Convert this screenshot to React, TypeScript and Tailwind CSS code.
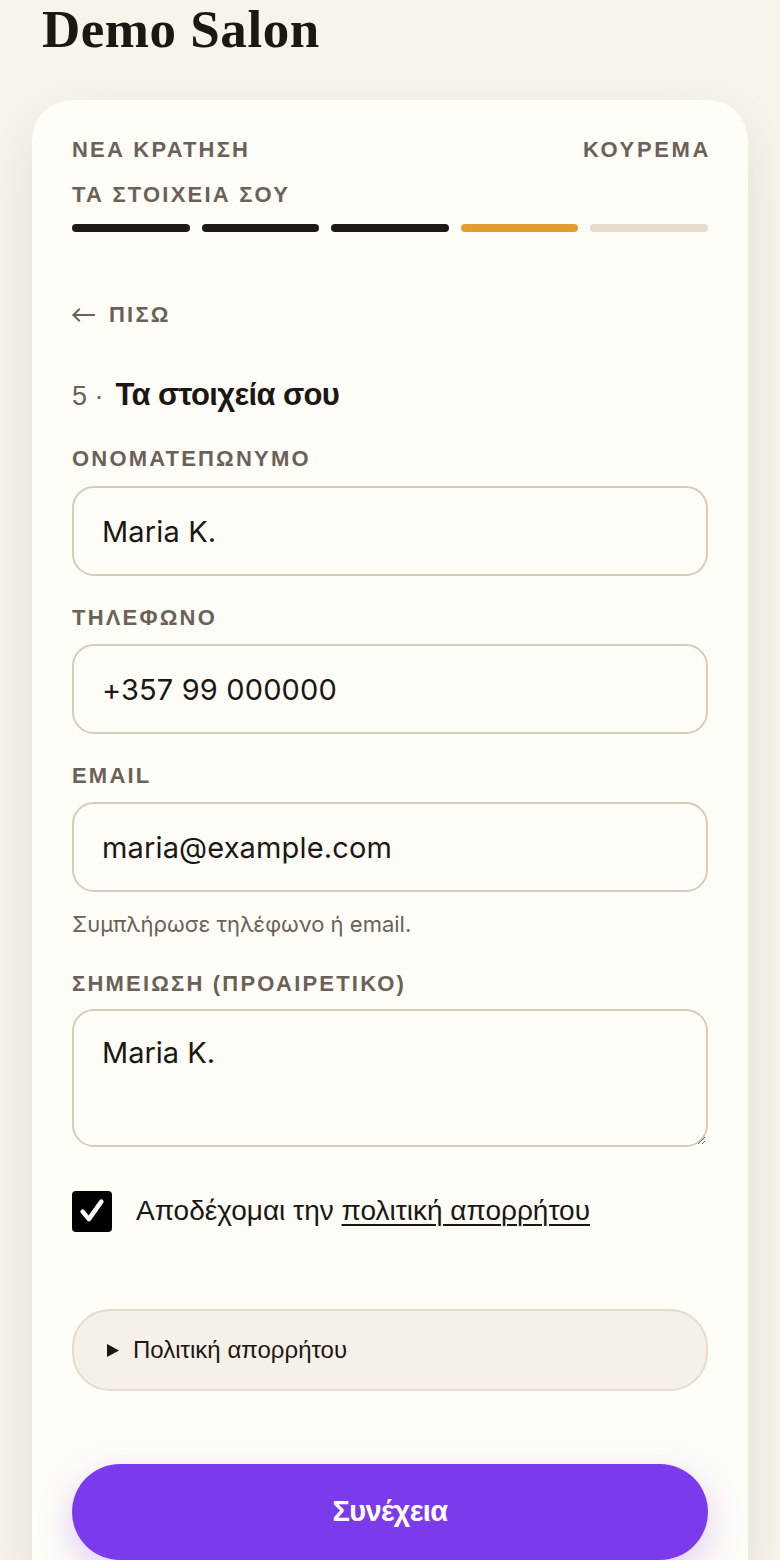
import React from "react";

const label =
  "block font-['Liberation_Sans',Arial,sans-serif] text-[22px] leading-6 font-bold tracking-[0.1em] text-[#6b6157] uppercase";
const field =
  "block w-full h-[90px] rounded-[22px] border-2 border-[#d8ccb8] bg-[#fffdf8] px-7 font-['Inter',sans-serif] text-[29px] tracking-[0.005em] text-[#1c1713] outline-none";

export default function App() {
  return (
    <div className="min-h-screen bg-[#f8f4ec] px-8 font-['Liberation_Sans',Arial,sans-serif]">
      <h1 className="pl-[10px] pt-[3px] font-['Liberation_Serif','Times_New_Roman',serif] text-[53px] leading-none font-bold text-[#1c1713] tracking-[0.01em]">
        Demo Salon
      </h1>

      <div className="mt-[44px] rounded-[40px] bg-[#fffdf8] px-10 pt-[38px] pb-10 shadow-[0_20px_60px_rgba(80,60,30,0.10)]">
        <div className="flex justify-between">
          <span className={label}>ΝΕΑ ΚΡΑΤΗΣΗ</span>
          <span className={label + " tracking-[0.12em] mr-[-3px]"}>ΚΟΥΡΕΜΑ</span>
        </div>
        <div className={label + " mt-[21px]"}>ΤΑ ΣΤΟΙΧΕΙΑ ΣΟΥ</div>

        <div className="mt-[17px] grid grid-cols-5 gap-3">
          <div className="h-2 rounded-full bg-[#1e1915]" />
          <div className="h-2 rounded-full bg-[#1e1915]" />
          <div className="h-2 rounded-full bg-[#1e1915]" />
          <div className="h-2 rounded-full bg-[#e49b2f]" />
          <div className="h-2 rounded-full bg-[#e6dccd]" />
        </div>

        <div className="mt-[71px] flex items-center gap-[14px] text-[#6b6157]">
          <svg width="23" height="14" viewBox="0 0 23 14" fill="none" className="shrink-0">
            <path d="M1.5 7 H22.5 M7 1.5 L1.5 7 L7 12.5" stroke="#6b6157" strokeWidth="2" strokeLinecap="square" />
          </svg>
          <span className={label}>ΠΙΣΩ</span>
        </div>

        <div className="mt-[50px] flex items-baseline h-9 leading-9">
          <span className="text-[27px] text-[#6b6157] mr-[12px]">5 ·</span>
          <span className="text-[31px] font-bold tracking-[-0.02em] text-[#1c1713]">
            Τα στοιχεία σου
          </span>
        </div>

        <label className={label + " mt-[34px]"}>ΟΝΟΜΑΤΕΠΩΝΥΜΟ</label>
        <input readOnly value="Maria K." className={field + " mt-[15px]"} />

        <label className={label + " mt-[30px]"}>ΤΗΛΕΦΩΝΟ</label>
        <input readOnly value="+357 99 000000" className={field + " mt-[14px]"} />

        <label className={label + " mt-[30px]"}>EMAIL</label>
        <input readOnly value="maria@example.com" className={field + " mt-[14px]"} />

        <p className="mt-[18px] font-['Inter',sans-serif] text-[22px] leading-7 text-[#6b6157]">
          Συμπλήρωσε τηλέφωνο ή email.
        </p>

        <label className={label + " mt-[34px]"}>ΣΗΜΕΙΩΣΗ (ΠΡΟΑΙΡΕΤΙΚΟ)</label>
        <textarea
          readOnly
          defaultValue="Maria K."
          className="mt-[13px] block w-full h-[138px] rounded-[22px] border-2 border-[#d8ccb8] bg-[#fffdf8] px-7 pt-[20px] font-['Inter',sans-serif] text-[29px] leading-[1.5] text-[#1c1713] outline-none"
        />

        <div className="mt-[43px] flex items-center gap-6">
          <div className="flex h-[41px] w-[40px] shrink-0 items-center justify-center rounded-[4px] bg-black">
            <svg width="30" height="30" viewBox="0 0 24 24" fill="none">
              <path
                d="M4.5 12.5 L9.5 18.5 L19.5 4.5"
                stroke="white"
                strokeWidth="3.6"
                strokeLinecap="round"
                strokeLinejoin="round"
              />
            </svg>
          </div>
          <span className="text-[28px] text-[#1c1713]">
            Αποδέχομαι την <span className="underline underline-offset-4 decoration-[1.5px]">πολιτική απορρήτου</span>
          </span>
        </div>

        <div className="mt-[77px] flex h-[82px] items-center gap-[14px] rounded-[38px] border-2 border-[#e6dccc] bg-[#f6f1e8] px-[33px]">
          <svg width="12" height="13" viewBox="0 0 12 13">
            <path d="M0 0 L12 6.5 L0 13 Z" fill="#1c1713" />
          </svg>
          <span className="text-[24px] text-[#1c1713]">Πολιτική απορρήτου</span>
        </div>

        <button className="mt-[73px] flex h-24 w-full items-center justify-center rounded-full bg-[#7c3aed] text-[29px] font-bold tracking-[-0.02em] text-white shadow-[0_12px_34px_rgba(124,58,237,0.25)]">
          Συνέχεια
        </button>
      </div>
    </div>
  );
}
